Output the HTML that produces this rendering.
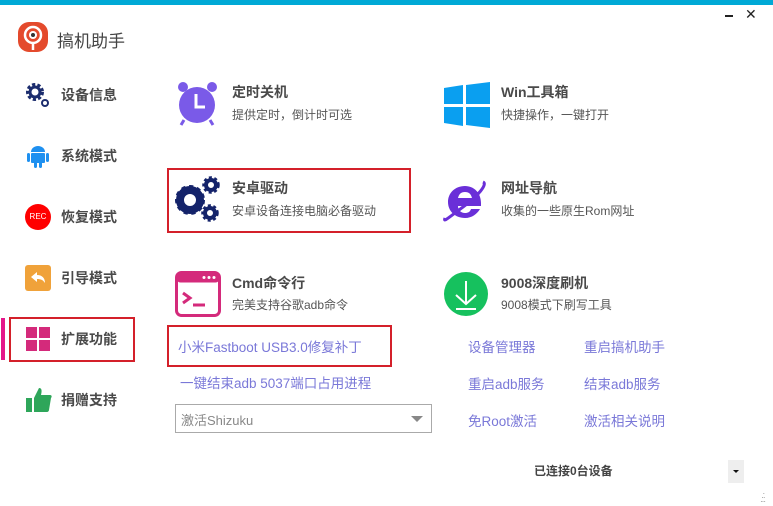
<!DOCTYPE html>
<html><head><meta charset="utf-8"><style>
*{margin:0;padding:0;box-sizing:border-box}
body{width:773px;height:506px;background:#fff;position:relative;overflow:hidden;font-family:"Liberation Sans","Noto Sans CJK SC",sans-serif;color:#444}
.a{position:absolute;white-space:nowrap}
.side{font-size:14px;font-weight:bold;color:#4a4a4a}
.t{font-size:14px;font-weight:bold;color:#4a4a4a}
.s{font-size:12px;color:#555}
.l{font-size:13.5px;color:#7a78d8}
</style></head><body>
<div class="a" style="left:0;top:0;width:773px;height:5px;background:#00a9d6"></div>
<div class="a" style="left:725px;top:15px;width:8px;height:2px;background:#222"></div>
<div class="a" style="left:745px;top:6px;font-size:14px;color:#222">✕</div>

<svg class="a" style="left:18px;top:22px" width="30" height="30" viewBox="0 0 30 30"><rect x="0" y="0" width="30" height="30" rx="11" fill="#e44a2c"/><circle cx="15" cy="13" r="8" fill="none" stroke="#fff" stroke-width="2.5"/><circle cx="15" cy="13" r="4" fill="#fff"/><circle cx="15" cy="13" r="2" fill="#333"/><path d="M15 21v7" stroke="#fff" stroke-width="2.5"/></svg>
<div class="a" style="left:57px;top:27px;font-size:17px;color:#444">搞机助手</div>

<svg class="a" style="left:25px;top:82px" width="26" height="28" viewBox="0 0 26 28"><circle cx="10" cy="10" r="7" fill="none" stroke="#1c2d6e" stroke-width="4" stroke-dasharray="3 2"/><circle cx="10" cy="10" r="5" fill="none" stroke="#1c2d6e" stroke-width="3"/><circle cx="20" cy="21" r="3" fill="none" stroke="#1c2d6e" stroke-width="2"/></svg>
<div class="a side" style="left:61px;top:85px">设备信息</div>
<svg class="a" style="left:26px;top:143px" width="24" height="26" viewBox="0 0 24 26"><path d="M5 9a7 6 0 0 1 14 0z" fill="#1e90f0"/><rect x="5" y="10" width="14" height="10" rx="1" fill="#1e90f0"/><rect x="1" y="10" width="3" height="9" rx="1.5" fill="#1e90f0"/><rect x="20" y="10" width="3" height="9" rx="1.5" fill="#1e90f0"/><rect x="8" y="19" width="3" height="6" rx="1.5" fill="#1e90f0"/><rect x="13" y="19" width="3" height="6" rx="1.5" fill="#1e90f0"/></svg>
<div class="a side" style="left:61px;top:146px">系统模式</div>
<div class="a" style="left:25px;top:204px;width:26px;height:26px;border-radius:50%;background:#f00;color:#fff;font-size:8px;line-height:26px;text-align:center">REC</div>
<div class="a side" style="left:61px;top:207px">恢复模式</div>
<div class="a" style="left:25px;top:265px;width:26px;height:26px;border-radius:3px;background:#f0a23a"></div>
<svg class="a" style="left:25px;top:265px" width="26" height="26"><path d="M6 12l6-5v3c5 0 8 3 8 8c-2-3-4-4-8-4v3z" fill="#fff"/></svg>
<div class="a side" style="left:61px;top:268px">引导模式</div>
<div class="a" style="left:1px;top:318px;width:4px;height:42px;background:#e4168a"></div>
<div class="a" style="left:9px;top:317px;width:126px;height:45px;border:2px solid #d4202a"></div>
<div class="a" style="left:26px;top:327px;width:11px;height:11px;background:#d42a7b"></div>
<div class="a" style="left:39px;top:327px;width:11px;height:11px;background:#d42a7b"></div>
<div class="a" style="left:26px;top:340px;width:11px;height:11px;background:#d42a7b"></div>
<div class="a" style="left:39px;top:340px;width:11px;height:11px;background:#d42a7b"></div>
<div class="a side" style="left:61px;top:329px">扩展功能</div>
<svg class="a" style="left:25px;top:386px" width="28" height="28" viewBox="0 0 28 28"><rect x="1" y="12" width="6" height="14" fill="#2ea65a"/><path d="M9 12l5-10c3 0 3 3 2 7h9c2 0 2 2 1 3l-2 12c0 1-1 2-2 2H9z" fill="#2ea65a"/></svg>
<div class="a side" style="left:61px;top:390px">捐赠支持</div>

<svg class="a" style="left:175px;top:80px" width="45" height="46" viewBox="0 0 45 46"><circle cx="22" cy="25" r="18" fill="#7a5ae8"/><circle cx="8" cy="7" r="5" fill="#7a5ae8"/><circle cx="37" cy="7" r="5" fill="#7a5ae8"/><path d="M9 40l-3 5M35 40l3 5" stroke="#7a5ae8" stroke-width="3"/><path d="M21 14v13h9" stroke="#fff" stroke-width="3" fill="none"/></svg>
<div class="a t" style="left:232px;top:82px">定时关机</div>
<div class="a s" style="left:232px;top:106px">提供定时，倒计时可选</div>

<svg class="a" style="left:444px;top:82px" width="46" height="46" viewBox="0 0 46 46"><path d="M0 6l19-3v19H0zM22 3l24-3v22H22zM0 25h19v19L0 41zM22 25h24v21l-24-3z" fill="#0a9ff0"/></svg>
<div class="a t" style="left:501px;top:82px">Win工具箱</div>
<div class="a s" style="left:501px;top:106px">快捷操作，一键打开</div>

<div class="a" style="left:167px;top:168px;width:244px;height:65px;border:2px solid #d4202a"></div>
<svg class="a" style="left:175px;top:176px" width="46" height="46" viewBox="0 0 46 46"><circle cx="15" cy="24" r="10" fill="none" stroke="#14236a" stroke-width="8"/><circle cx="15" cy="24" r="13" fill="none" stroke="#14236a" stroke-width="4" stroke-dasharray="4 3.5"/><circle cx="36" cy="9" r="5" fill="none" stroke="#14236a" stroke-width="4"/><circle cx="36" cy="9" r="7.5" fill="none" stroke="#14236a" stroke-width="2.5" stroke-dasharray="3 2.5"/><circle cx="35" cy="37" r="5" fill="none" stroke="#14236a" stroke-width="4"/><circle cx="35" cy="37" r="7.5" fill="none" stroke="#14236a" stroke-width="2.5" stroke-dasharray="3 2.5"/></svg>
<div class="a t" style="left:232px;top:178px">安卓驱动</div>
<div class="a s" style="left:232px;top:202px">安卓设备连接电脑必备驱动</div>

<svg class="a" style="left:443px;top:178px" width="46" height="46" viewBox="0 0 46 46"><path d="M22 8c-10 0-17 7-17 16s7 16 17 16c7 0 12-4 15-9H28c-1 3-3 4-6 4-4 0-7-3-7-7h23v-3c0-10-7-17-16-17zM15 20c1-4 3-6 7-6s6 2 7 6z" fill="#6a2fd8"/><path d="M40 4c5 2-5 14-20 25S0 45 2 40" stroke="#6a2fd8" stroke-width="3" fill="none"/></svg>
<div class="a t" style="left:501px;top:178px">网址导航</div>
<div class="a s" style="left:501px;top:202px">收集的一些原生Rom网址</div>

<svg class="a" style="left:175px;top:271px" width="46" height="46" viewBox="0 0 46 46"><rect x="1.5" y="1.5" width="43" height="43" rx="5" fill="none" stroke="#d42a7b" stroke-width="3"/><rect x="1.5" y="1.5" width="43" height="10" rx="4" fill="#d42a7b"/><circle cx="29" cy="6.5" r="1.5" fill="#fff"/><circle cx="34" cy="6.5" r="1.5" fill="#fff"/><circle cx="39" cy="6.5" r="1.5" fill="#fff"/><path d="M8 22l7 5-7 5M18 34h12" stroke="#d42a7b" stroke-width="3" fill="none"/></svg>
<div class="a t" style="left:232px;top:273px">Cmd命令行</div>
<div class="a s" style="left:232px;top:296px">完美支持谷歌adb命令</div>

<svg class="a" style="left:443px;top:271px" width="46" height="46" viewBox="0 0 46 46"><circle cx="23" cy="23" r="22" fill="#16c15e"/><path d="M23 10v22M13 24l10 9 10-9M13 38h20" stroke="#fff" stroke-width="2" fill="none"/></svg>
<div class="a t" style="left:501px;top:273px">9008深度刷机</div>
<div class="a s" style="left:501px;top:296px">9008模式下刷写工具</div>

<div class="a" style="left:167px;top:325px;width:225px;height:42px;border:2px solid #d4202a"></div>
<div class="a l" style="left:178px;top:336px">小米Fastboot USB3.0修复补丁</div>
<div class="a l" style="left:180px;top:372px">一键结束adb 5037端口占用进程</div>
<div class="a" style="left:175px;top:404px;width:257px;height:29px;border:1px solid #aaa"></div>
<div class="a" style="left:181px;top:410px;font-size:13px;color:#888">激活Shizuku</div>
<div class="a" style="left:411px;top:416px;width:0;height:0;border-left:6px solid transparent;border-right:6px solid transparent;border-top:6px solid #888"></div>

<div class="a l" style="left:468px;top:336px">设备管理器</div>
<div class="a l" style="left:584px;top:336px">重启搞机助手</div>
<div class="a l" style="left:468px;top:373px">重启adb服务</div>
<div class="a l" style="left:584px;top:373px">结束adb服务</div>
<div class="a l" style="left:468px;top:410px">免Root激活</div>
<div class="a l" style="left:584px;top:410px">激活相关说明</div>

<div class="a" style="left:534px;top:462px;font-size:12px;font-weight:bold;color:#444">已连接0台设备</div>
<div class="a" style="left:728px;top:460px;width:16px;height:23px;background:#eee"></div>
<div class="a" style="left:733px;top:470px;width:0;height:0;border-left:3px solid transparent;border-right:3px solid transparent;border-top:3px solid #111"></div>
<div class="a" style="left:760px;top:492px;font-size:8px;color:#888;line-height:4px;letter-spacing:-1px">&nbsp;&nbsp;·<br>&nbsp;··<br>···</div>
</body></html>
